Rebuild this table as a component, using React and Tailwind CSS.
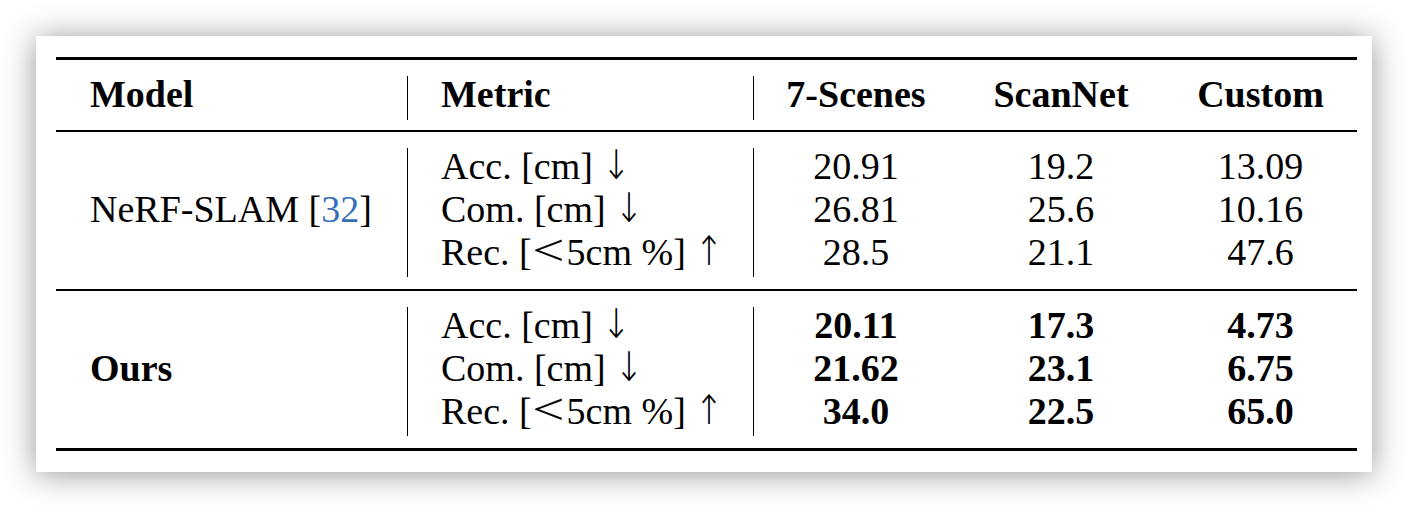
const groups = [
  {
    model: (
      <>
        NeRF-SLAM [<span className="text-[#3570b8]">32</span>]
      </>
    ),
    bold: false,
    rows: [
      ["20.91", "19.2", "13.09"],
      ["26.81", "25.6", "10.16"],
      ["28.5", "21.1", "47.6"],
    ],
  },
  {
    model: <span className="font-bold">Ours</span>,
    bold: true,
    rows: [
      ["20.11", "17.3", "4.73"],
      ["21.62", "23.1", "6.75"],
      ["34.0", "22.5", "65.0"],
    ],
  },
];

const mathFont = { fontFamily: '"DejaVu Sans", sans-serif' };

function Arrow({ up }) {
  return (
    <span
      className="ml-[9px] inline-block origin-[50%_75%] scale-y-[1.2] text-[34px] font-extralight"
      style={mathFont}
    >
      {up ? "↑" : "↓"}
    </span>
  );
}

const metrics = [
  <>Acc. [cm]<Arrow /></>,
  <>Com. [cm]<Arrow /></>,
  <>
    Rec. [<span className="mr-[2px] inline-block origin-bottom scale-x-[1.3] px-[4px] text-[44px] leading-[33px]">&lt;</span>5cm %]<Arrow up />
  </>,
];

function Group({ group, last }) {
  return (
    <div className={`flex pt-[16px] pb-[12px] ${last ? "border-b-[3px]" : "border-b-2"} border-black`}>
      <div className="flex w-[351px] items-center pl-[34px] pb-[6px]">{group.model}</div>
      <div className="w-[346px] border-l border-black pl-[33px]">
        {metrics.map((m, i) => (
          <div key={i} className="h-[43px] whitespace-nowrap">
            {m}
          </div>
        ))}
      </div>
      <div className={`flex border-l border-black ${group.bold ? "font-bold" : ""}`}>
        {[0, 1, 2].map((col) => (
          <div key={col} className={col === 0 ? "w-[204px]" : col === 1 ? "w-[206px]" : "w-[193px]"}>
            {group.rows.map((r, i) => (
              <div key={i} className="h-[43px] text-center">
                {r[col]}
              </div>
            ))}
          </div>
        ))}
      </div>
    </div>
  );
}

export default function App() {
  return (
    <div className="h-[508px] w-[1408px] bg-white p-[36px]">
      <div
        className="h-[436px] w-[1336px] bg-white pl-[20px] pr-[15px] pt-[21px] text-[38px] leading-[37px] text-black shadow-[0_2px_30px_rgba(0,0,0,0.42)]"
        style={{ fontFamily: '"Liberation Serif", "Times New Roman", serif' }}
      >
        <div className="border-t-[3px] border-black">
          <div className="flex border-b-2 border-black pt-[16px] pb-[10px] font-bold">
            <div className="h-[44px] w-[351px] pl-[34px]">Model</div>
            <div className="w-[346px] border-l border-black pl-[33px]">Metric</div>
            <div className="flex border-l border-black">
              <div className="w-[204px] text-center">7-Scenes</div>
              <div className="w-[206px] text-center">ScanNet</div>
              <div className="w-[193px] text-center">Custom</div>
            </div>
          </div>
          {groups.map((g, i) => (
            <Group key={i} group={g} last={i === groups.length - 1} />
          ))}
        </div>
      </div>
    </div>
  );
}
